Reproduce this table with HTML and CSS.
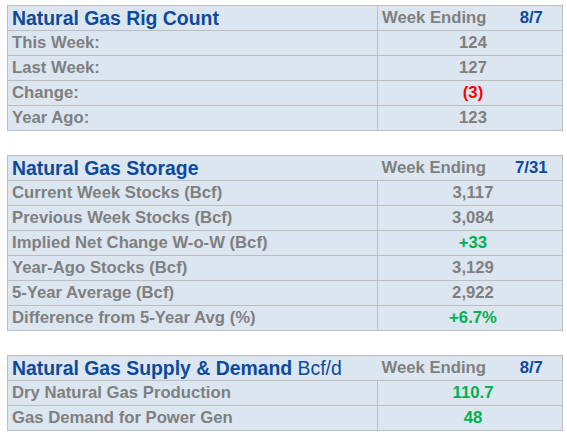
FILE: index.html
```html
<!DOCTYPE html>
<html lang="en">
<head>
    <meta charset="UTF-8">
    <title>Natural Gas Weekly Snapshot</title>
    <link rel="stylesheet" href="styles.css">
</head>
<body>
    <div class="sheet">
        <!-- Rig count -->
        <table class="block">
            <colgroup>
                <col class="c-label">
                <col class="c-week">
                <col class="c-date">
            </colgroup>
            <tr class="head">
                <td class="title">Natural Gas Rig Count</td>
                <td class="week">Week Ending</td>
                <td class="date">8/7</td>
            </tr>
            <tr><td>This Week:</td><td class="value" colspan="2">124</td></tr>
            <tr><td>Last Week:</td><td class="value" colspan="2">127</td></tr>
            <tr><td>Change:</td><td class="value down" colspan="2">(3)</td></tr>
            <tr><td>Year Ago:</td><td class="value" colspan="2">123</td></tr>
        </table>

        <!-- Storage -->
        <table class="block open-head">
            <colgroup>
                <col class="c-label">
                <col class="c-week">
                <col class="c-date">
            </colgroup>
            <tr class="head">
                <td class="title">Natural Gas Storage</td>
                <td class="week">Week Ending</td>
                <td class="date">7/31</td>
            </tr>
            <tr><td>Current Week Stocks (Bcf)</td><td class="value" colspan="2">3,117</td></tr>
            <tr><td>Previous Week Stocks (Bcf)</td><td class="value" colspan="2">3,084</td></tr>
            <tr><td>Implied Net Change W-o-W (Bcf)</td><td class="value up" colspan="2">+33</td></tr>
            <tr><td>Year-Ago Stocks (Bcf)</td><td class="value" colspan="2">3,129</td></tr>
            <tr><td>5-Year Average (Bcf)</td><td class="value" colspan="2">2,922</td></tr>
            <tr><td>Difference from 5-Year Avg (%)</td><td class="value up" colspan="2">+6.7%</td></tr>
        </table>

        <!-- Supply & demand -->
        <table class="block open-head">
            <colgroup>
                <col class="c-label">
                <col class="c-week">
                <col class="c-date">
            </colgroup>
            <tr class="head">
                <td class="title">Natural Gas Supply &amp; Demand <span class="unit">Bcf/d</span></td>
                <td class="week">Week Ending</td>
                <td class="date">8/7</td>
            </tr>
            <tr><td>Dry Natural Gas Production</td><td class="value up" colspan="2">110.7</td></tr>
            <tr><td>Gas Demand for Power Gen</td><td class="value up" colspan="2">48</td></tr>
        </table>
    </div>
</body>
</html>
```

FILE: styles.css
```css
* {
    margin: 0;
    padding: 0;
    box-sizing: border-box;
}

body {
    font-family: 'Liberation Sans', Arial, sans-serif;
    background-color: #ffffff;
    color: #7f7f7f;
}

.sheet {
    padding: 5px 0 0 7px;
}

.block {
    width: 555px;
    table-layout: fixed;
    border-collapse: collapse;
    background-color: #dce6f1;
    margin-bottom: 24px;
}

.c-label { width: 370px; }
.c-week { width: 123px; }
.c-date { width: 62px; }

td {
    border: 1px solid #bdbdbd;
    height: 25px;
    padding: 0 0 0 4px;
    font-size: 16.7px;
    font-weight: bold;
    white-space: nowrap;
    vertical-align: middle;
}

.head .title {
    font-size: 19.4px;
    color: #0d4a9e;
}

.head .title .unit {
    font-weight: normal;
}

.head .week {
    border-right: hidden;
}

.head .date {
    text-align: center;
    padding: 0;
    color: #0d4a9e;
}

.open-head .head .title {
    border-right: hidden;
}

.value {
    text-align: center;
    padding: 0 0 0 6px;
}

.up {
    color: #00b050;
}

.down {
    color: #ff0000;
}
```
